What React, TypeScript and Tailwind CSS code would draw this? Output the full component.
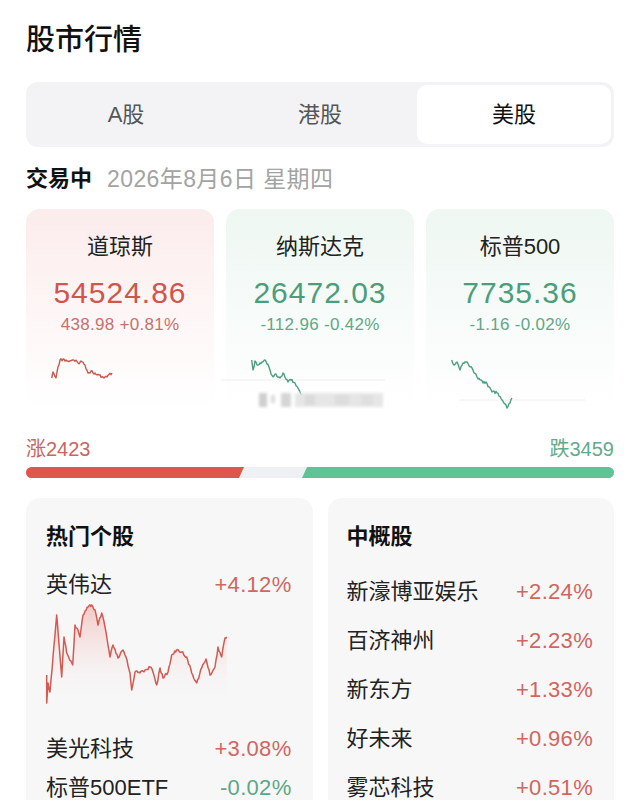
import React from 'react';

type Pt = [number, number];

const FONT = { fontFamily: '"Liberation Sans", "Noto Sans CJK SC", sans-serif' };

// jagged line through key points, noise is deterministic
function jagged(pts: Pt[], step: number, amp: number, seed: number): Pt[] {
  const out: Pt[] = [];
  let n = 0;
  for (let i = 0; i < pts.length - 1; i++) {
    const [x1, y1] = pts[i];
    const [x2, y2] = pts[i + 1];
    const segs = Math.max(1, Math.round(Math.abs(x2 - x1) / step));
    for (let s = 0; s < segs; s++) {
      const t = s / segs;
      const r = Math.sin((n + seed) * 12.9898) * 43758.5453;
      const noise = (r - Math.floor(r) - 0.5) * amp;
      out.push([x1 + (x2 - x1) * t, y1 + (y2 - y1) * t + (s === 0 ? 0 : noise)]);
      n++;
    }
  }
  out.push(pts[pts.length - 1]);
  return out;
}

const toD = (pts: Pt[]) => pts.map((p, i) => `${i ? 'L' : 'M'}${p[0].toFixed(1)} ${p[1].toFixed(1)}`).join(' ');

const dowPts: Pt[] = [[0.7, 23], [2, 17], [5, 23], [7, 12], [9, 5], [12, 4], [17, 6], [22, 5], [27, 8], [30, 6], [34, 10], [37, 18], [40, 16], [46, 20], [52, 22], [56, 22], [61, 18]];
const nasPts: Pt[] = [[0.7, 5], [2, 15], [4, 6], [7, 10], [11, 7], [14, 5], [19, 15], [22, 22], [25, 19], [29, 23], [32, 18], [37, 27], [40, 25], [44, 28], [47, 33], [51, 43], [54, 50]];
const spxPts: Pt[] = [[0.7, 5], [3, 10], [6, 7], [9, 15], [12, 8], [16, 7], [21, 13], [26, 22], [32, 28], [35, 27], [41, 37], [46, 38], [51, 45], [56, 53], [59, 48], [61, 43]];

const nvdaPts: Pt[] = [[0.7, 70], [0.7, 98], [2, 78], [4, 87], [7, 52], [10.7, 10], [15.7, 72], [18, 32], [20.7, 48], [23, 53], [26.7, 60], [29, 20], [32, 25], [34, 32], [37, 10], [42, 2], [45.7, 0], [49, 5], [52, 20], [55.7, 8], [59, 22], [62, 40], [64, 52], [67, 40], [72, 53], [77, 45], [81, 55], [84, 68], [85.7, 85], [89, 67], [94, 68], [99, 65], [104, 62], [107, 67], [110.7, 80], [114, 63], [117, 73], [122, 67], [125.7, 50], [130.7, 45], [135.7, 47], [140.7, 52], [145.7, 68], [150.7, 78], [155.7, 63], [160, 54], [164, 70], [169, 62], [172, 42], [175.7, 52], [179, 33], [180.7, 32]];

const Spark: React.FC<{ pts: Pt[]; color: string; base?: number; blur?: boolean; seed: number }> = ({ pts, color, base, blur, seed }) => (
  <svg width="160" height="58" viewBox="0 0 160 58" className="block overflow-visible">
    {blur && (
      <defs>
        <filter id="smear">
          <feGaussianBlur stdDeviation="1.6" />
        </filter>
      </defs>
    )}
    {base !== undefined && <line x1={base > 30 ? 8 : -30} y1={base} x2="134" y2={base} stroke="#eeeeee" strokeWidth="1" />}
    <path d={toD(jagged(pts, 1, 3, seed))} fill="none" stroke={color} strokeWidth="1.4" strokeLinejoin="round" />
    {blur && (
      <g filter="url(#smear)">
        <rect x="8" y="38" width="8" height="14" fill="#cfcfcf" />
        <rect x="20" y="40" width="4" height="8" fill="#dcdcdc" />
        <rect x="30" y="38" width="10" height="14" fill="#d6d6d6" />
        <rect x="44" y="38" width="88" height="14" fill="#e6e6e6" />
        <rect x="54" y="40" width="10" height="10" fill="#dadada" />
        <rect x="84" y="40" width="14" height="10" fill="#dddddd" />
        <rect x="110" y="40" width="12" height="10" fill="#dfdfdf" />
      </g>
    )}
  </svg>
);

const IndexCard: React.FC<{ name: string; price: string; change: string; up: boolean; children: React.ReactNode }> = ({ name, price, change, up, children }) => (
  <div className={`h-[200px] rounded-[14px] pt-6 ${up ? 'bg-gradient-to-b from-[#fcecec] to-[#ffffff]' : 'bg-gradient-to-b from-[#eef7f2] to-[#ffffff]'}`}>
    <div className="text-center text-[22px] leading-[28px] text-[#222]">{name}</div>
    <div className={`mt-[14px] text-center text-[30px] leading-[36px] tracking-[1px] ${up ? 'text-[#d0554d]' : 'text-[#4b9e7b]'}`}>{price}</div>
    <div className={`mt-1 text-center text-[17px] leading-[20px] tracking-[0.3px] ${up ? 'text-[#c9706a]' : 'text-[#62a788]'}`}>{change}</div>
    <div className="mt-5 pl-[25px]">{children}</div>
  </div>
);

const Row: React.FC<{ name: string; value: string; up: boolean; className?: string }> = ({ name, value, up, className }) => (
  <div className={`flex items-center justify-between text-[22px] leading-[30px] ${className ?? ''}`}>
    <span className="text-[#222]">{name}</span>
    <span className={`tracking-[0.3px] ${up ? 'text-[#d0665e]' : 'text-[#5aa886]'}`}>{value}</span>
  </div>
);

export default function App() {
  const nvdaLine = jagged(nvdaPts, 1, 3, 7);
  const nvdaArea = `${toD(nvdaLine)} L180.7 100 L0.7 100 Z`;

  return (
    <div className="w-[640px] h-[800px] overflow-hidden bg-white px-[26px] pt-6" style={FONT}>
      <h1 className="text-[29px] leading-[32px] font-medium text-[#111]">股市行情</h1>

      <div className="mt-[26px] grid h-[65px] grid-cols-3 rounded-xl bg-[#f3f3f5] p-[3px]">
        <div className="flex items-center justify-center text-[22px] text-[#555]">A股</div>
        <div className="flex items-center justify-center text-[22px] text-[#555]">港股</div>
        <div className="flex items-center justify-center rounded-[10px] bg-white text-[22px] text-[#111]">美股</div>
      </div>

      <div className="mt-[18px] flex items-center gap-[15px] leading-[28px]">
        <span className="text-[22px] font-semibold text-[#111]">交易中</span>
        <span className="text-[23px] tracking-[0.4px] text-[#a3a3a3]">2026年8月6日 星期四</span>
      </div>

      <div className="mt-4 grid grid-cols-3 gap-3">
        <IndexCard name="道琼斯" price="54524.86" change="438.98 +0.81%" up>
          <Spark pts={dowPts} color="#c9584f" seed={3} />
        </IndexCard>
        <IndexCard name="纳斯达克" price="26472.03" change="-112.96 -0.42%" up={false}>
          <Spark pts={nasPts} color="#4c9f7c" base={25} blur seed={11} />
        </IndexCard>
        <IndexCard name="标普500" price="7735.36" change="-1.16 -0.02%" up={false}>
          <Spark pts={spxPts} color="#4c9f7c" base={45} seed={19} />
        </IndexCard>
      </div>

      <div className="mt-7 flex items-center justify-between text-[20px] leading-[24px]">
        <span className="text-[#c8665f]">涨2423</span>
        <span className="text-[#62ab8a]">跌3459</span>
      </div>

      <div className="mt-[6px] flex h-[11px] justify-between rounded-full bg-[#eff0f3]">
        <div className="h-full w-[218px] rounded-l-full bg-[#e0564a] [clip-path:polygon(0_0,100%_0,calc(100%-5px)_100%,0_100%)]" />
        <div className="h-full w-[312px] rounded-r-full bg-[#5fc396] [clip-path:polygon(5px_0,100%_0,100%_100%,0_100%)]" />
      </div>

      <div className="mt-5 grid grid-cols-2 gap-[15px]">
        <div className="h-[320px] rounded-[14px] bg-[#f7f7f8] pl-5 pr-[21px] pt-6">
          <div className="text-[22px] leading-[30px] font-semibold text-[#111]">热门个股</div>
          <Row name="英伟达" value="+4.12%" up className="mt-[18px]" />
          <svg width="182" height="100" viewBox="0 0 182 100" className="mt-[5px] block overflow-visible">
            <defs>
              <linearGradient id="nvfill" x1="0" y1="0" x2="0" y2="1">
                <stop offset="0" stopColor="#f3b9b4" stopOpacity="0.75" />
                <stop offset="1" stopColor="#f7f7f8" stopOpacity="0" />
              </linearGradient>
            </defs>
            <path d={nvdaArea} fill="url(#nvfill)" />
            <path d={toD(nvdaLine)} fill="none" stroke="#d25a50" strokeWidth="1.5" strokeLinejoin="round" />
          </svg>
          <Row name="美光科技" value="+3.08%" up className="mt-[29px]" />
          <Row name="标普500ETF" value="-0.02%" up={false} className="mt-[9px]" />
        </div>

        <div className="h-[320px] rounded-[14px] bg-[#f7f7f8] pl-[19px] pr-[21px] pt-6">
          <div className="text-[22px] leading-[30px] font-semibold text-[#111]">中概股</div>
          <div className="mt-[25px] flex flex-col gap-[19px]">
            <Row name="新濠博亚娱乐" value="+2.24%" up />
            <Row name="百济神州" value="+2.23%" up />
            <Row name="新东方" value="+1.33%" up />
            <Row name="好未来" value="+0.96%" up />
            <Row name="雾芯科技" value="+0.51%" up />
          </div>
        </div>
      </div>
    </div>
  );
}
